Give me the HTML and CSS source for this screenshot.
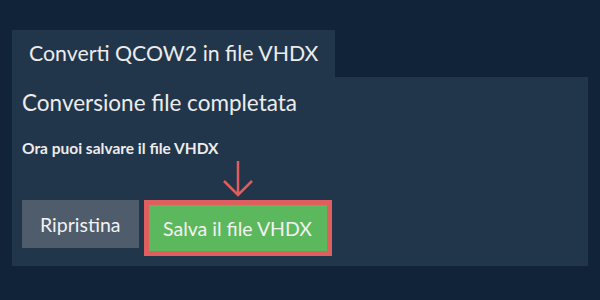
FILE: index.html
```html
<!DOCTYPE html>
<html lang="it">

<head>
    <meta charset="UTF-8">
    <meta name="viewport" content="width=device-width, initial-scale=1.0">
    <title>Converti QCOW2 in file VHDX</title>
    <link rel="stylesheet" href="styles.css">
</head>

<body>
    <div class="page">
        <div class="tab">Converti QCOW2 in file VHDX</div>
        <div class="panel">
            <h2 class="title">Conversione file completata</h2>
            <p class="note">Ora puoi salvare il file VHDX</p>
            <div class="actions">
                <button class="btn reset">Ripristina</button>
                <div class="save-wrap">
                    <svg class="arrow" width="32" height="38" viewBox="0 0 32 38">
                        <path d="M16 1 V35 M2 21 L16 35 L30 21" fill="none" stroke="#e05d5d" stroke-width="2.5"/>
                    </svg>
                    <button class="btn save">Salva il file VHDX</button>
                </div>
            </div>
        </div>
    </div>
</body>

</html>
```

FILE: styles.css
```css
html,
body {
    margin: 0;
    padding: 0;
}

body {
    background-color: #112338;
    font-family: Lato, "Liberation Sans", sans-serif;
    color: #ececec;
}

.page {
    padding: 30px 12px 0;
}

.tab {
    display: inline-block;
    background-color: #22364b;
    font-size: 21.3px;
    line-height: 47px;
    height: 47px;
    padding: 0 17px;
}

.panel {
    background-color: #22364b;
    padding: 10px 10px 10px;
}

.title {
    margin: 0;
    font-size: 22.5px;
    font-weight: normal;
    line-height: 32px;
}

.note {
    margin: 19px 0 0;
    font-size: 15.5px;
    font-weight: bold;
    line-height: 20px;
}

.actions {
    display: flex;
    align-items: flex-start;
    gap: 5px;
    margin-top: 42px;
}

.btn {
    font-family: Lato, "Liberation Sans", sans-serif;
    font-size: 19.5px;
    color: #f2f2f2;
    border: none;
    margin: 0;
    cursor: pointer;
}

.reset {
    background-color: #4e5c6c;
    height: 48px;
    padding: 0 18px;
}

.save-wrap {
    position: relative;
}

.save {
    background-color: #5cb85c;
    border: 5px solid #df5e5e;
    height: 56px;
    width: 188px;
    padding: 0;
}

.arrow {
    position: absolute;
    left: 50%;
    bottom: 100%;
    margin-left: -16px;
    margin-bottom: 2px;
}
```
